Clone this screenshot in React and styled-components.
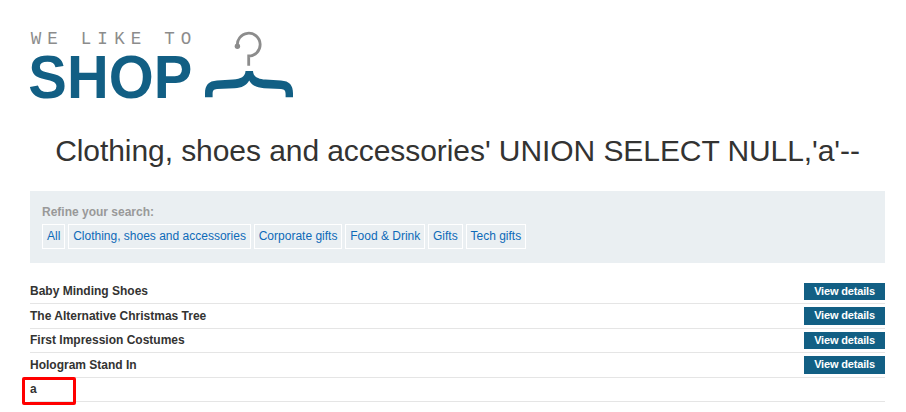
import React from 'react';
import styled, { createGlobalStyle } from 'styled-components';

const GlobalStyle = createGlobalStyle`
  * { box-sizing: border-box; }
  body {
    margin: 0;
    background: #fff;
    color: #333332;
    font-family: "Liberation Sans", Arial, sans-serif;
    font-size: 12px;
  }
`;

const Page = styled.main`
  width: 906px;
  height: 412px;
  padding: 20px 21px 0 30px;
  overflow: hidden;
`;

const Logo = styled.svg`
  display: block;
  width: 280px;
  height: 90px;
  overflow: visible;
`;

const Tagline = styled.text`
  font: 17.5px "Liberation Mono", "Courier New", monospace;
  fill: #8c8c8c;
  text-anchor: middle;
`;

const Wordmark = styled.text`
  font: bold 61px "Liberation Sans", Arial, sans-serif;
  fill: #125f84;
`;

const Title = styled.h1`
  height: 36px;
  margin: 23px 0 22px;
  font-size: 30px;
  font-weight: 400;
  line-height: 36px;
  letter-spacing: -0.07px;
  text-align: center;
  white-space: nowrap;
`;

const Filters = styled.section`
  height: 72px;
  padding: 13px 12px;
  background: #eaeff2;
`;

const FiltersLabel = styled.div`
  height: 20px;
  color: #999;
  font-weight: 700;
  line-height: 16px;
`;

const FilterList = styled.nav`
  display: flex;
  gap: 2.8px;
`;

const FilterLink = styled.a`
  height: 25px;
  padding: 0 4px;
  border: 1px solid #fff;
  color: #0d6ab8;
  line-height: 22px;
  white-space: nowrap;
`;

const Products = styled.ul`
  margin: 16.5px 0 0;
  padding: 0;
  list-style: none;
`;

const Product = styled.li`
  display: flex;
  justify-content: space-between;
  align-items: flex-start;
  height: 24.5px;
  padding-top: 3.3px;
  border-bottom: 1px solid #e5e5e5;
  font-weight: 700;
`;

const ProductName = styled.span`
  position: relative;
  margin-top: 0.3px;
  line-height: 16px;
`;

const DetailsButton = styled.a`
  width: 81px;
  height: 17.5px;
  background: #125f84;
  color: #fff;
  font-size: 11px;
  letter-spacing: -0.17px;
  line-height: 17px;
  text-align: center;
`;

const Highlight = styled.span`
  position: absolute;
  left: -8px;
  top: -4px;
  width: 54px;
  height: 28px;
  border: 3px solid #f00;
  border-radius: 2px;
`;

const categories = ['All', 'Clothing, shoes and accessories', 'Corporate gifts', 'Food & Drink', 'Gifts', 'Tech gifts'];
const products = [
  { name: 'Baby Minding Shoes', details: true },
  { name: 'The Alternative Christmas Tree', details: true },
  { name: 'First Impression Costumes', details: true },
  { name: 'Hologram Stand In', details: true },
  { name: 'a', highlighted: true },
];

function ShopLogo() {
  return (
    <Logo viewBox="30 20 280 90" role="img" aria-label="We like to shop">
      <Tagline y="44.3" x="36 52.5 69 86 102.5 119.5 136 152.5 169.5 186">WE LIKE TO</Tagline>
      <Wordmark x="28.3" y="97.5" textLength="164" lengthAdjust="spacingAndGlyphs">SHOP</Wordmark>
      <circle cx="237.4" cy="46.3" r="2.7" fill="#8c8c8c" />
      <path d="M237.5 46.5A11.4 11.4 0 1 1 248.7 56V65.7" fill="none" stroke="#8c8c8c" strokeWidth="2.8" strokeLinejoin="miter" />
      <path d="M205 97.3V93.5C205 85 208.5 81 217 80.4L233 79.6C241 79 245.3 76.5 245.5 71H253C253.2 76.5 257.5 79 265.5 79.6L281 80.4C289.5 81 293 85 293 93.5V97.3H285.6V94C285.6 90.5 284.3 89.2 281 88.9L264 88.2C256.5 87.8 252 85.5 249.2 80.5C246.5 85.5 242 87.8 234.5 88.2L217 88.9C213.7 89.2 212.6 90.5 212.6 94V97.3Z" fill="#125f84" />
    </Logo>
  );
}

export default function App() {
  return (
    <>
      <GlobalStyle />
      <Page>
        <ShopLogo />
        <Title>Clothing, shoes and accessories' UNION SELECT NULL,'a'--</Title>
        <Filters>
          <FiltersLabel>Refine your search:</FiltersLabel>
          <FilterList>
            {categories.map((name) => <FilterLink key={name}>{name}</FilterLink>)}
          </FilterList>
        </Filters>
        <Products>
          {products.map(({ name, details, highlighted }) => (
            <Product key={name}>
              <ProductName>{name}{highlighted && <Highlight />}</ProductName>
              {details && <DetailsButton>View details</DetailsButton>}
            </Product>
          ))}
        </Products>
      </Page>
    </>
  );
}
